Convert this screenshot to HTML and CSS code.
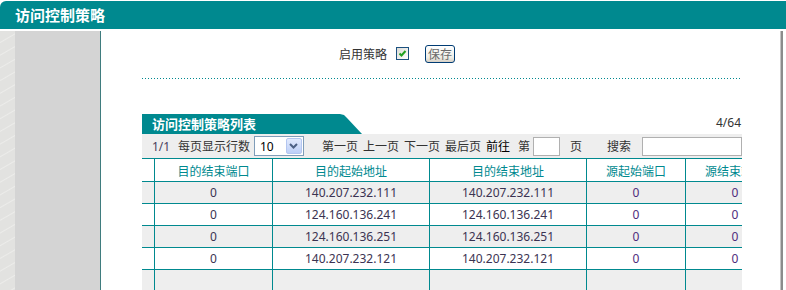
FILE: index.html
```html
<!DOCTYPE html>
<html lang="zh-CN">
<head>
	<meta charset="UTF-8">
	<title>访问控制策略</title>
	<link rel="stylesheet" href="styles.css">
</head>
<body>
	<div class="title-bar">访问控制策略</div>
	<div class="main">
		<div class="side"><div class="side-strip"></div></div>
		<div class="content">
			<div class="enable-row">
				<span class="enable-label">启用策略</span>
				<span class="check">
					<svg width="11" height="11" viewBox="0 0 11 11"><path d="M2.5 5.5 L4.5 7.5 L8.5 3" fill="none" stroke="#21a121" stroke-width="2"/></svg>
				</span>
				<button class="btn-save">保存</button>
			</div>
			<div class="dots"></div>
			<div class="list">
				<div class="list-head">
					<div class="tab">访问控制策略列表</div>
					<div class="count">4/64</div>
				</div>
				<div class="toolbar">
					<span class="pages">1/1</span>
					<span class="per">每页显示行数</span>
					<span class="select">
						<span class="select-val">10</span>
						<span class="select-btn">
							<svg width="9" height="6" viewBox="0 0 9 6"><path d="M1 1 L4.5 4.5 L8 1" fill="none" stroke="#4d6185" stroke-width="2"/></svg>
						</span>
					</span>
					<span class="nav first">第一页</span>
					<span class="nav">上一页</span>
					<span class="nav">下一页</span>
					<span class="nav">最后页</span>
					<span class="goto">前往</span>
					<span class="nav">第</span>
					<span class="box page-box"></span>
					<span class="nav">页</span>
					<span class="search-label">搜索</span>
					<span class="box search-box"></span>
				</div>
				<div class="grid-wrap">
					<table class="grid">
						<tr class="head">
							<th class="c0"></th>
							<th class="c1">目的结束端口</th>
							<th class="c2">目的起始地址</th>
							<th class="c3">目的结束地址</th>
							<th class="c4">源起始端口</th>
							<th class="c5">源结束端口</th>
						</tr>
						<tr class="odd">
							<td></td><td>0</td><td>140.207.232.111</td><td>140.207.232.111</td><td class="port">0</td><td class="port">0</td>
						</tr>
						<tr>
							<td></td><td>0</td><td>124.160.136.241</td><td>124.160.136.241</td><td class="port">0</td><td class="port">0</td>
						</tr>
						<tr class="odd">
							<td></td><td>0</td><td>124.160.136.251</td><td>124.160.136.251</td><td class="port">0</td><td class="port">0</td>
						</tr>
						<tr>
							<td></td><td>0</td><td>140.207.232.121</td><td>140.207.232.121</td><td class="port">0</td><td class="port">0</td>
						</tr>
						<tr class="odd">
							<td></td><td></td><td></td><td></td><td></td><td></td>
						</tr>
					</table>
				</div>
			</div>
		</div>
		<div class="edge"></div>
	</div>
</body>
</html>
```

FILE: styles.css
```css
*{
	margin: 0;
	padding: 0;
	box-sizing: border-box;
}
body{
	width: 786px;
	height: 290px;
	overflow: hidden;
	background: #fff;
	font-family: "Noto Sans", "Noto Sans CJK SC", sans-serif;
	font-size: 12px;
	color: #333;
}
.title-bar{
	margin-top: 1px;
	height: 28px;
	line-height: 28px;
	padding-left: 15px;
	background: #00898f;
	border-radius: 6px 0 0 0;
	color: #fff;
	font-family: "Noto Sans CJK SC", sans-serif;
	font-size: 15px;
	font-weight: bold;
}
.main{
	margin-top: 2px;
	height: 259px;
	display: flex;
}
.side{
	width: 101px;
	background: #d4d4d4;
	border-right: 1px solid #3f7c7e;
}
.side-strip{
	width: 15px;
	height: 100%;
	background: #e2e2e0 repeating-linear-gradient(150deg, #e2e2e0 0, #e2e2e0 9px, #ececea 10px, #e2e2e0 11px);
}
.content{
	flex: 1;
	padding-left: 41px;
}
.edge{
	width: 5px;
	border-left: 1px solid #c4c4c4;
	box-shadow: inset 2px 0 0 #8c8c8c;
	margin-right: 1px;
}
.enable-row{
	margin-top: 13px;
	height: 19px;
	display: flex;
	align-items: center;
	padding-left: 197px;
}
.enable-label{
	font-family: "Noto Sans CJK SC", sans-serif;
	color: #333;
}
.check{
	width: 13px;
	height: 13px;
	margin-left: 9px;
	border: 1px solid #1c5180;
	background: linear-gradient(135deg, #dcdcd6, #fff);
	display: flex;
	align-items: center;
	justify-content: center;
}
.btn-save{
	width: 30px;
	height: 18px;
	margin-left: 16px;
	border: 1px solid #003c74;
	border-radius: 3px;
	background: linear-gradient(#fff, #f0efe8 70%, #d6d0c5);
	font-family: "Noto Sans CJK SC", sans-serif;
	font-size: 12px;
	line-height: 15px;
	color: #6b6b6b;
}
.dots{
	margin-top: 15px;
	width: 598px;
	height: 1px;
	background: repeating-linear-gradient(90deg, #00898f 0 1px, transparent 1px 3px);
}
.list{
	width: 600px;
	margin-top: 35px;
}
.list-head{
	height: 20px;
	display: flex;
	justify-content: space-between;
	align-items: flex-end;
}
.tab{
	width: 220px;
	height: 20px;
	line-height: 19px;
	padding-left: 10px;
	background: #00898f;
	color: #fff;
	font-family: "Noto Sans CJK SC", sans-serif;
	font-size: 13px;
	font-weight: bold;
	clip-path: polygon(0 0, 198px 0, 202px 1px, 205px 4px, 220px 20px, 0 20px);
}
.count{
	padding-right: 1px;
	line-height: 22px;
	color: #333;
}
.toolbar{
	height: 24px;
	background: #eee;
	display: flex;
	align-items: center;
	padding-left: 10px;
	white-space: nowrap;
}
.pages{
	width: 26px;
	color: #4a3f5c;
}
.per{
	margin-right: 4px;
}
.select{
	width: 50px;
	height: 20px;
	border: 1px solid #7f9db9;
	background: #fff;
	display: flex;
	align-items: center;
	justify-content: space-between;
	padding: 1px;
}
.select-val{
	padding-left: 4px;
	color: #000;
}
.select-btn{
	width: 16px;
	height: 16px;
	border: 1px solid #b4c6f0;
	border-radius: 2px;
	background: linear-gradient(#e2eafd, #bccff8);
	display: flex;
	align-items: center;
	justify-content: center;
}
.nav{
	margin-left: 5px;
}
.nav.first{
	margin-left: 18px;
}
.goto{
	margin-left: 5px;
	margin-right: 3px;
	color: #000;
}
.box{
	height: 19px;
	background: #fff;
	border: 1px solid #b0b0b0;
}
.page-box{
	width: 27px;
	margin-left: 3px;
	margin-right: 5px;
}
.search-label{
	margin-left: 25px;
	margin-right: 11px;
}
.search-box{
	width: 100px;
}
.grid-wrap{
	width: 600px;
	height: 140px;
	overflow: hidden;
}
.grid{
	width: 643px;
	table-layout: fixed;
	border-collapse: separate;
	border-spacing: 0;
	border-top: 1px solid #00898f;
}
.grid th,
.grid td{
	height: 22px;
	padding: 0;
	text-align: center;
	border-right: 1px solid #00898f;
	border-bottom: 1px solid #00898f;
	font-weight: normal;
	white-space: nowrap;
	overflow: hidden;
}
.grid th{
	height: 23px;
	color: #00898f;
	font-family: "Noto Sans CJK SC", sans-serif;
}
.grid td{
	color: #3b3352;
}
.grid td.port{
	color: #4f2c7c;
}
.grid .c0{ width: 13px; }
.grid .c1{ width: 118px; }
.grid .c2{ width: 157px; }
.grid .c3{ width: 157px; }
.grid .c4{ width: 99px; }
.grid .c5{ width: 99px; }
.grid tr.odd td{
	background: #eee;
}
```
